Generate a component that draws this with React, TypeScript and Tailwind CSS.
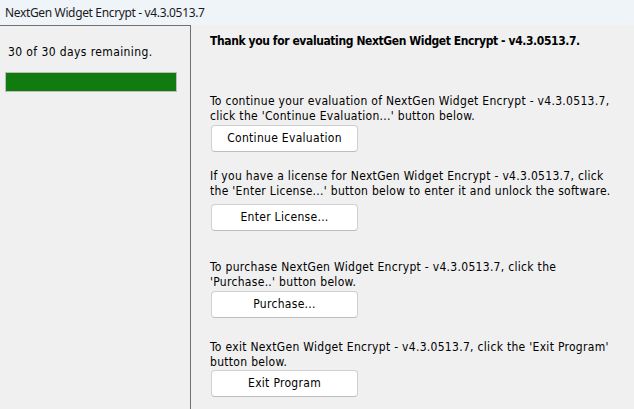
import React from 'react';

const PRODUCT = 'NextGen Widget Encrypt - v4.3.0513.7';

const WinButton: React.FC<{ label: string; className?: string }> = ({ label, className = '' }) => (
  <button
    className={`ml-px w-[147px] h-[27px] bg-white border border-[#d0d0d0] border-b-[#bdbdbd] rounded-[4px] text-[12px] tracking-[0.3px] text-black ${className}`}
  >
    {label}
  </button>
);

const App: React.FC = () => {
  return (
    <div className="w-[634px] h-[409px] overflow-hidden bg-[#f0f0f0] flex flex-col text-black [font-family:'DejaVu_Sans_Condensed','DejaVu_Sans',sans-serif]">
      <div className="h-[25px] shrink-0 bg-[#eff4f9] pl-[5px] flex items-center text-[12px] tracking-[-0.35px] [font-family:'Noto_Sans',sans-serif] text-[#1a1a1a]">
        {PRODUCT}
      </div>

      <div className="flex flex-1 min-h-0">
        <aside className="w-[191px] shrink-0 border-t border-r border-[#707070]">
          <div className="pl-[8px] pt-[19px] text-[12px] leading-[15px] tracking-[0.4px]">30 of 30 days remaining.</div>
          <div className="ml-[5px] mt-[12px] w-[172px] h-[20px] border border-[#bcbcbc] bg-[#107c10]" />
        </aside>

        <main className="flex-1 pl-[19px] flex flex-col items-start text-[12px] leading-[15px] tracking-[0.3px]">
          <h1 className="mt-[9px] font-bold text-[12px] leading-[15px] tracking-[-0.4px]">Thank you for evaluating {PRODUCT}.</h1>

          <p className="mt-[45px]">
            To continue your evaluation of {PRODUCT},<br />
            click the 'Continue Evaluation...' button below.
          </p>
          <WinButton label="Continue Evaluation" className="mt-px" />

          <p className="mt-[17px]">
            If you have a license for {PRODUCT}, click<br />
            the 'Enter License...' button below to enter it and unlock the software.
          </p>
          <WinButton label="Enter License..." className="mt-[5px]" />

          <p className="mt-[29px]">
            To purchase {PRODUCT}, click the<br />
            'Purchase..' button below.
          </p>
          <WinButton label="Purchase..." className="mt-px" />

          <p className="mt-[22px]">
            To exit {PRODUCT}, click the 'Exit Program'<br />
            button below.
          </p>
          <WinButton label="Exit Program" />
        </main>
      </div>
    </div>
  );
};

export default App;
